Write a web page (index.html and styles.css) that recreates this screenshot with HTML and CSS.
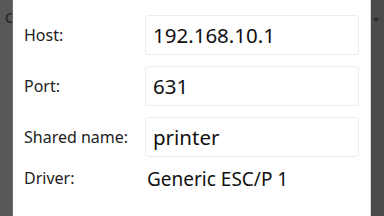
FILE: index.html
```html
<!DOCTYPE html>
<html>
<head>
<meta charset="utf-8">
<link rel="stylesheet" href="styles.css">
</head>
<body>
<div class="screen">
  <div class="side side-left"><span class="peek">C</span></div>
  <div class="dialog">
    <div class="form">
      <div class="label">Host:</div>
      <div class="field">192.168.10.1</div>
      <div class="label">Port:</div>
      <div class="field">631</div>
      <div class="label">Shared name:</div>
      <div class="field">printer</div>
      <div class="label label-driver">Driver:</div>
      <div class="value">Generic ESC/P 1</div>
    </div>
  </div>
  <div class="side side-right"><span class="mark"></span></div>
</div>
</body>
</html>
```
FILE: styles.css
```css
html, body {
  margin: 0;
  padding: 0;
  width: 384px;
  height: 216px;
  overflow: hidden;
  background-color: #ffffff;
}
.screen {
  display: flex;
  width: 384px;
  height: 216px;
  font-family: "Noto Sans", "Open Sans", sans-serif;
  color: #1a1a1a;
}
.side {
  flex: none;
  position: relative;
  overflow: hidden;
}
.side-left {
  width: 12px;
  background-color: #585858;
  border-right: 1px solid #6c6c6c;
}
.side-right {
  width: 13px;
  background-color: #4a4a4a;
  border-left: 1px solid #d6d6d6;
}
.peek {
  position: absolute;
  left: 5px;
  top: 8px;
  font-size: 15px;
  line-height: 18px;
  color: #1e1e1e;
}
.mark {
  position: absolute;
  left: 3px;
  top: 18px;
  width: 4px;
  height: 3px;
  background-color: #2b2b2b;
}
.dialog {
  flex: 1 1 auto;
  min-width: 0;
  background-color: #ffffff;
  padding: 15px 11px 0 11px;
}
.form {
  display: grid;
  grid-template-columns: 121px minmax(0, 1fr);
  grid-auto-rows: 40px;
  row-gap: 11px;
  align-items: center;
}
.label {
  font-size: 16px;
  color: #222;
}
.field {
  height: 40px;
  box-sizing: border-box;
  border: 1px solid #ececec;
  border-radius: 3px;
  padding: 0 7px;
  display: flex;
  align-items: center;
  font-size: 20.5px;
  color: #111;
}
.value {
  font-size: 19px;
  padding-left: 2px;
  color: #111;
  align-self: start;
  margin-top: -2px;
}
.label-driver {
  align-self: start;
  margin-top: -1px;
}
```
